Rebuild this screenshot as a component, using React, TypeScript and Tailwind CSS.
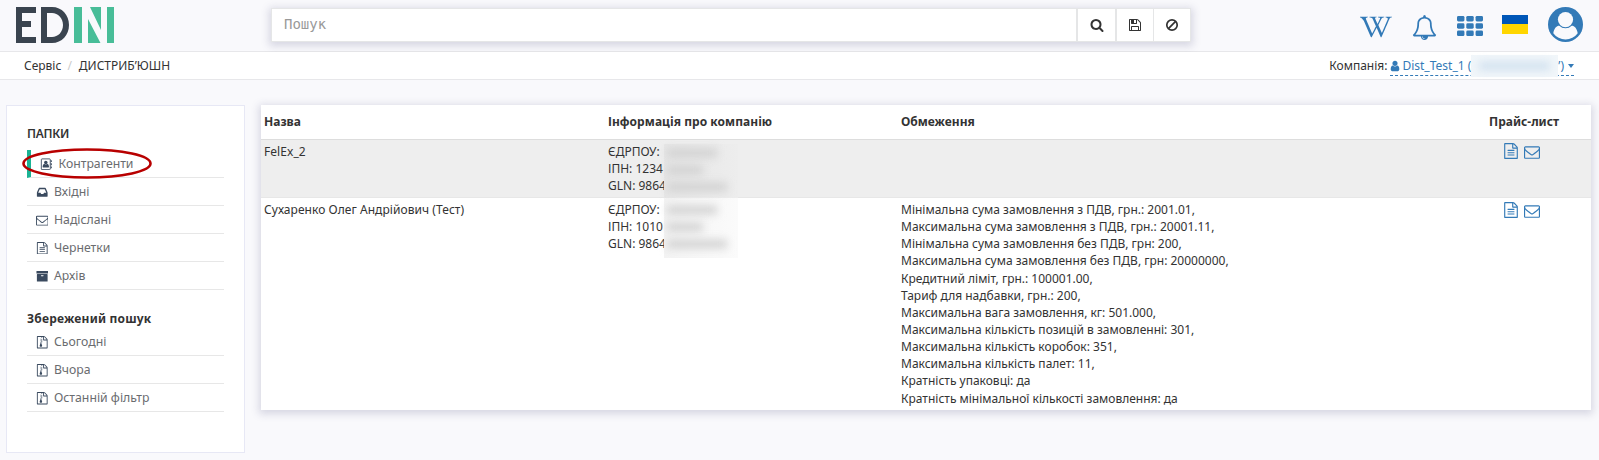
import React from "react";
import { FaWikipediaW } from "react-icons/fa";

type IconProps = { className?: string };

const glyph = (d: string) =>
  function Glyph({ className }: IconProps) {
    return (
      <svg viewBox="0 0 1792 1792" fill="currentColor" className={className}>
        <path d={d} />
      </svg>
    );
  };

const Envelope = glyph(
  "M1664 1504v-768q-32 36-69 66-268 206-426 338-51 43-83 67t-86.5 48.5-102.5 24.5h-2q-48 0-102.5-24.5t-86.5-48.5-83-67q-158-132-426-338-37-30-69-66v768q0 13 9.5 22.5t22.5 9.5h1472q13 0 22.5-9.5t9.5-22.5zm0-1051v-24.5l-.5-13-3-12.5-5.5-9-9-7.5-14-2.5h-1472q-13 0-22.5 9.5t-9.5 22.5q0 168 147 284 193 152 401 317 6 5 35 29.5t46 37.5 44.5 31.5 50.5 27.5 43 9h2q20 0 43-9t50.5-27.5 44.5-31.5 46-37.5 35-29.5q208-165 401-317 54-43 100.5-115.5t46.5-131.5zm128-37v1088q0 66-47 113t-113 47h-1472q-66 0-113-47t-47-113v-1088q0-66 47-113t113-47h1472q66 0 113 47t47 113z"
);
const FileText = glyph(
  "M1596 380q28 28 48 76t20 88v1152q0 40-28 68t-68 28h-1344q-40 0-68-28t-28-68v-1600q0-40 28-68t68-28h896q40 0 88 20t76 48zm-444-244v376h376q-10-29-22-41l-313-313q-12-12-41-22zm384 1528v-1024h-416q-40 0-68-28t-28-68v-416h-768v1536h1280zm-1024-864q0-14 9-23t23-9h704q14 0 23 9t9 23v64q0 14-9 23t-23 9h-704q-14 0-23-9t-9-23v-64zm736 224q14 0 23 9t9 23v64q0 14-9 23t-23 9h-704q-14 0-23-9t-9-23v-64q0-14 9-23t23-9h704zm0 256q14 0 23 9t9 23v64q0 14-9 23t-23 9h-704q-14 0-23-9t-9-23v-64q0-14 9-23t23-9h704z"
);
const FileZip = glyph(
  "M1596 380q28 28 48 76t20 88v1152q0 40-28 68t-68 28h-1344q-40 0-68-28t-28-68v-1600q0-40 28-68t68-28h896q40 0 88 20t76 48zm-444-244v376h376q-10-29-22-41l-313-313q-12-12-41-22zm384 1528v-1024h-416q-40 0-68-28t-28-68v-416h-128v128h-128v-128h-512v1536h1280zm-896-1280v128h128v-128h-128zm128 128v128h128v-128h-128zm-128 128v128h128v-128h-128zm128 128v128h128v-128h-128zm-128 128v128l-107 349q-21 70 30 121t141 51 141-51 30-121l-107-349v-128h-128z"
);
const Bell = glyph(
  "M912 1696q0-16-16-16-59 0-101.500-42.500t-42.500-101.500q0-16-16-16t-16 16q0 73 51.500 124.500t124.500 51.500q16 0 16-16zm-666-288h1300q-266-300-266-832 0-51-24-105t-69-103-121.500-80.500-169.500-31.500-169.500 31.500-121.500 80.500-69 103-24 105q0 532-266 832zm1482 0q0 52-38 90t-90 38h-448q0 106-75 181t-181 75-181-75-75-181h-448q-52 0-90-38t-38-90q50-42 91-88t85-119.500 74.500-158.500 50-206 19.500-260q0-152 117-282.500t307-158.500q-8-19-8-39 0-40 28-68t68-28 68 28 28 68q0 20-8 39 190 28 307 158.500t117 282.500q0 139 19.500 260t50 206 74.500 158.500 85 119.500 91 88z"
);
const Search = glyph(
  "M1216 832q0-185-131.500-316.500t-316.500-131.500-316.500 131.500-131.500 316.500 131.500 316.500 316.500 131.500 316.500-131.500 131.500-316.500zm512 832q0 52-38 90t-90 38q-54 0-90-38l-343-342q-179 124-399 124-143 0-273.500-55.500t-225-150-150-225-55.500-273.500 55.500-273.500 150-225 225-150 273.500-55.500 273.500 55.500 225 150 150 225 55.500 273.500q0 220-124 399l343 343q37 37 37 90z"
);
const Floppy = glyph(
  "M512 1536h768v-384h-768v384zm896 0h128v-896q0-14-10-38.500t-20-34.500l-281-281q-10-10-34-20t-39-10v416q0 40-28 68t-68 28h-576q-40 0-68-28t-28-68v-416h-128v1280h128v-416q0-40 28-68t68-28h832q40 0 68 28t28 68v416zm-384-928v-320q0-13-9.500-22.500t-22.500-9.500h-192q-13 0-22.500 9.500t-9.500 22.500v320q0 13 9.500 22.500t22.500 9.500h192q13 0 22.500-9.500t9.500-22.500zm640 32v928q0 40-28 68t-68 28h-1344q-40 0-68-28t-28-68v-1344q0-40 28-68t68-28h928q40 0 88 20t76 48l280 280q28 28 48 76t20 88z"
);
const Inbox = glyph(
  "M1151 960h316q-1-3-2.500-8t-2.500-8l-212-496h-708l-212 496q-1 2-2.500 8t-2.500 8h316l95 192h320zm513 30v482q0 26-19 45t-45 19h-1408q-26 0-45-19t-19-45v-482q0-62 25-123l238-552q10-25 36.500-42t52.500-17h832q26 0 52.500 17t36.500 42l238 552q25 61 25 123z"
);
const Archive = glyph(
  "M1088 832q0-26-19-45t-45-19h-256q-26 0-45 19t-19 45 19 45 45 19h256q26 0 45-19t19-45zm576-192v960q0 26-19 45t-45 19h-1408q-26 0-45-19t-19-45v-960q0-26 19-45t45-19h1408q26 0 45 19t19 45zm64-448v256q0 26-19 45t-45 19h-1536q-26 0-45-19t-19-45v-256q0-26 19-45t45-19h1536q26 0 45 19t19 45z"
);
const User = glyph(
  "M1536 1399q0 109-62.500 187t-150.500 78h-854q-88 0-150.500-78t-62.500-187q0-85 8.500-160.500t31.500-152 58.500-131 94-89 134.500-34.500q131 128 313 128t313-128q76 0 134.500 34.500t94 89 58.500 131 31.500 152 8.500 160.500zm-256-887q0 159-112.500 271.500t-271.500 112.500-271.500-112.500-112.500-271.500 112.500-271.500 271.500-112.500 271.500 112.500 112.500 271.500z"
);

function AddressBook({ className }: IconProps) {
  return (
    <svg viewBox="0 0 1792 1792" className={className} fill="currentColor">
      <rect x="192" y="128" width="1280" height="1536" rx="96" fill="none" stroke="currentColor" strokeWidth="128" />
      <rect x="1536" y="320" width="160" height="256" rx="32" />
      <rect x="1536" y="768" width="160" height="256" rx="32" />
      <rect x="1536" y="1216" width="160" height="256" rx="32" />
      <circle cx="832" cy="640" r="250" />
      <path d="M370 1270q0-400 250-440 90 90 212 90t212-90q250 40 250 440 0 74-74 74h-776q-74 0-74-74z" />
    </svg>
  );
}

function Ban({ className }: IconProps) {
  return (
    <svg viewBox="0 0 14 14" className={className} fill="none" stroke="currentColor" strokeWidth="1.7">
      <circle cx="7" cy="7" r="5.200" />
      <path d="M3.400 10.600l7.200-7.200" />
    </svg>
  );
}

function Grid({ className }: IconProps) {
  const cols = [0, 640, 1280];
  const rows = [128, 640, 1152];
  return (
    <svg viewBox="0 128 1792 1408" preserveAspectRatio="none" className={className} fill="currentColor">
      {rows.map((y) => cols.map((x) => <rect key={`${x}-${y}`} x={x} y={y} width="512" height="384" rx="96" />))}
    </svg>
  );
}

function Avatar({ className }: IconProps) {
  return (
    <svg viewBox="0 0 35 35" className={className}>
      <circle cx="17.500" cy="17.500" r="17.500" fill="#337ab7" />
      <path d="M5.300 26.200C6 21.800 8 18.900 11.700 18.500a8.300 8.300 0 0 0 11.600 0c3.700.4 5.700 3.300 6.400 7.700a15 15 0 0 1-24.400 0z" fill="#f9f9fc" />
      <circle cx="17.500" cy="12.600" r="8.700" fill="#337ab7" />
      <circle cx="17.500" cy="12.600" r="7.600" fill="#f9f9fc" />
    </svg>
  );
}

function Logo({ className }: IconProps) {
  return (
    <svg viewBox="0 0 98 36" className={className}>
      <path d="M0 0h20v6H6v8h9v6H6v10h14v6H0z" fill="#3a444f" />
      <path fillRule="evenodd" d="M25 0h11c10 0 17 8 17 18s-7 18-17 18H25zm6 6v24h5c6 0 11-5 11-12S42 6 36 6z" fill="#3a444f" />
      <path d="M58 0h8v36h-8zM91 0h7v36h-7zM74 0h11v23zM72 12l12.500 24H72z" fill="#48bd98" />
    </svg>
  );
}

function MenuItem({ icon: Icon, label, active }: { icon: React.ComponentType<IconProps>; label: string; active?: boolean }) {
  return (
    <li
      className={
        active
          ? "flex h-7 items-center border-b border-l-4 border-b-[#e7e7e7] border-l-[#1ab394] pt-px pl-[9px]"
          : "flex h-7 items-center border-b border-b-[#e7e7e7] pt-px pl-[8.5px]"
      }
    >
      <Icon className="mr-[6px] size-[12.5px] shrink-0 text-[#3a4a5f]" />
      <span className="text-[12.25px] leading-none text-[#6a6c6f]">{label}</span>
    </li>
  );
}

const limits = [
  "Мінімальна сума замовлення з ПДВ, грн.: 2001.01,",
  "Максимальна сума замовлення з ПДВ, грн.: 20001.11,",
  "Мінімальна сума замовлення без ПДВ, грн: 200,",
  "Максимальна сума замовлення без ПДВ, грн: 20000000,",
  "Кредитний ліміт, грн.: 100001.00,",
  "Тариф для надбавки, грн.: 200,",
  "Максимальна вага замовлення, кг: 501.000,",
  "Максимальна кількість позицій в замовленні: 301,",
  "Максимальна кількість коробок: 351,",
  "Максимальна кількість палет: 11,",
  "Кратність упаковці: да",
  "Кратність мінімальної кількості замовлення: да",
];

const companies = [
  { name: "FelEx_2", info: ["ЄДРПОУ:", "ІПН: 1234", "GLN: 9864"], limits: [] as string[] },
  { name: "Сухаренко Олег Андрійович (Тест)", info: ["ЄДРПОУ:", "ІПН: 1010", "GLN: 9864"], limits },
];

const smudges = ["w-[50px]", "w-9", "w-[60px]"];

export default function App() {
  return (
    <div className="flex h-[460px] w-[1599px] flex-col overflow-hidden bg-[#f9f9fc] font-['Noto_Sans',sans-serif] text-[12px] leading-[17.143px] text-[#333]">
      <header className="flex h-[52px] shrink-0 border-b border-[#e7e7ea]">
        <Logo className="mt-[7px] ml-4 h-9 w-[98px]" />
        <div className="mt-2 ml-[157px] flex h-[34px] w-[920px] border border-[#e5e6e7] bg-white shadow-[0_2px_8px_2px_rgba(60,60,110,0.18)]">
          <div className="flex flex-1 items-center pl-3 font-['DejaVu_Sans_Mono',monospace] text-[14px] text-[#999]">Пошук</div>
          <button className="flex w-[39px] items-center justify-center border-l-2 border-[#e5e6e7]">
            <Search className="size-[14px]" />
          </button>
          <button className="flex w-[38px] items-center justify-center border-l-2 border-[#e5e6e7]">
            <Floppy className="size-[14px]" />
          </button>
          <button className="flex w-[37px] items-center justify-center border-l border-[#e5e6e7]">
            <Ban className="size-[14px]" />
          </button>
        </div>
        <div className="ml-auto flex pr-4 text-[#337ab7]">
          <FaWikipediaW className="mt-[11px] mr-[20px] size-8" />
          <Bell className="mt-[14.5px] mr-[20px] size-[25px]" />
          <Grid className="mt-[16px] mr-[19px] h-[20px] w-[26px]" />
          <div className="mt-[15px] mr-5 h-[19px] w-[26px] border-b-[10px] border-[#ffd600] bg-[#0057b8]" />
          <Avatar className="mt-[7px] size-[35px]" />
        </div>
      </header>

      <nav className="flex h-7 shrink-0 items-center border-b border-[#e7e7ea] bg-white pr-[25px] pl-6">
        <span>Сервіс</span>
        <span className="mr-[7px] ml-[6px] text-[#ccc]">/</span>
        <span>ДИСТРИБ’ЮШН</span>
        <span className="mr-[3px] ml-auto">Компанія:</span>
        <div className="mt-[2px] flex h-[18px] items-center border-b border-dashed border-[#337ab7] pb-px text-[#337ab7]">
          <User className="-ml-px mr-px size-3" />
          <span>Dist_Test_1 (</span>
          <span className="flex h-[22px] w-[87px] items-center bg-[#f1f6fa] px-2">
            <span className="h-2 w-full bg-[#cfe0ee] blur-[4px]" />
          </span>
          <span>’)</span>
          <span className="ml-1 border-x-[3.5px] border-t-4 border-x-transparent border-t-[#337ab7]" />
        </div>
      </nav>

      <div className="flex pt-[25px] pl-[6px]">
        <aside className="h-[348px] w-[239px] border border-[#e7e8f5] bg-white px-5 pt-[19px]">
          <h2 className="mb-[8px] font-semibold tracking-[-0.3px]">ПАПКИ</h2>
          <div className="relative">
            <ul>
              <MenuItem icon={AddressBook} label="Контрагенти" active />
              <MenuItem icon={Inbox} label="Вхідні" />
              <MenuItem icon={Envelope} label="Надіслані" />
              <MenuItem icon={FileText} label="Чернетки" />
              <MenuItem icon={Archive} label="Архів" />
            </ul>
            <svg className="absolute -top-[2px] -left-[5.5px] h-[31px] w-[130px]" viewBox="0 0 130 31" fill="none">
              <ellipse cx="65" cy="15.500" rx="63.500" ry="14" stroke="#b80000" strokeWidth="2.600" />
            </svg>
          </div>
          <h2 className="mt-5 mb-[1px] font-bold tracking-[0.2px]">Збережений пошук</h2>
          <ul>
            <MenuItem icon={FileZip} label="Сьогодні" />
            <MenuItem icon={FileZip} label="Вчора" />
            <MenuItem icon={FileZip} label="Останній фільтр" />
          </ul>
        </aside>

        <main className="ml-4 h-[305px] w-[1330px] bg-white shadow-[0_2px_8px_2px_rgba(60,60,110,0.18)]">
          <div className="grid h-[35px] grid-cols-[344px_293px_588px_105px] items-center border-b border-[#ddd] font-bold">
            <div className="pl-[3px]">Назва</div>
            <div className="pl-[3px] tracking-[0.05px]">Інформація про компанію</div>
            <div className="pl-[3px]">Обмеження</div>
            <div className="pl-[3px]">Прайс-лист</div>
          </div>
          {companies.map((c, i) => (
            <div
              key={c.name}
              className={
                i === 0
                  ? "grid h-[58px] grid-cols-[344px_293px_588px_105px] border-b border-[#e7e7e7] bg-[#eee] pt-[3px]"
                  : "grid grid-cols-[344px_293px_588px_105px] pt-[3px]"
              }
            >
              <div className="pl-[3px] tracking-[0.06px]">{c.name}</div>
              <div className="flex pl-[3px]">
                <div className="w-14 whitespace-nowrap">
                  {c.info.map((t) => (
                    <div key={t}>{t}</div>
                  ))}
                </div>
                <div
                  className={
                    i === 0
                      ? "mt-px h-[54px] w-[74px] bg-linear-to-r from-[#e6e6e6] to-[#ededed]"
                      : "-mt-[3px] h-[60px] w-[74px] bg-linear-to-r from-[#f3f3f3] to-[#fbfbfb]"
                  }
                >
                  {smudges.map((w, k) => (
                    <div key={k} className={i === 0 ? "flex h-[17px] items-center" : "flex h-[17px] translate-y-[3px] items-center"}>
                      <div className={`${w} ml-[3px] h-2 bg-[#d0d0d0] blur-[4px]`} />
                    </div>
                  ))}
                </div>
              </div>
              <div className="pl-[3px]">
                {c.limits.map((t) => (
                  <div key={t}>{t}</div>
                ))}
              </div>
              <div className={i === 0 ? "flex gap-[5px] pl-[17px] text-[#337ab7]" : "flex gap-[5px] pt-px pl-[17px] text-[#337ab7]"}>
                <FileText className="size-4" />
                <Envelope className="mt-[1px] size-4" />
              </div>
            </div>
          ))}
        </main>
      </div>
    </div>
  );
}
